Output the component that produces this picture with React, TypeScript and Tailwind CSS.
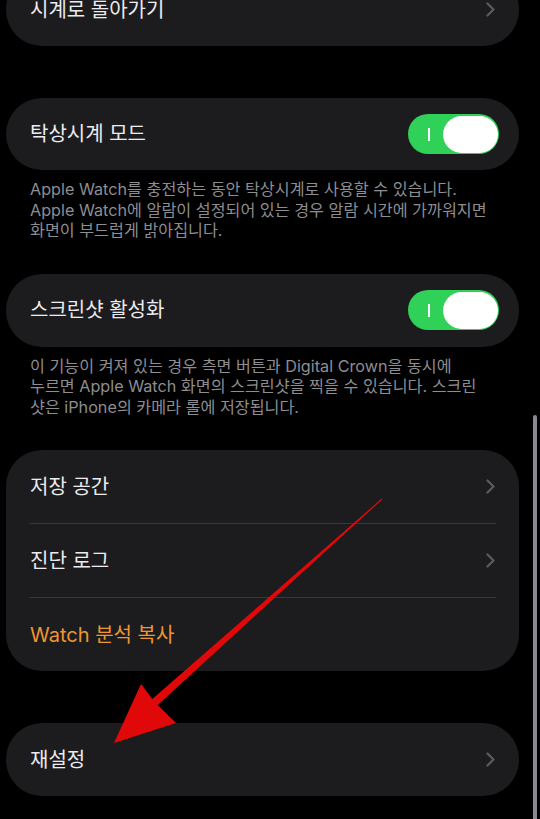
import React from "react";

const font = { fontFamily: 'Inter, "Noto Sans CJK KR", sans-serif' };

const Chevron = () => (
  <svg width="9" height="15" viewBox="0 0 9 15" fill="none">
    <path d="M1.5 1.5 L7.5 7.5 L1.5 13.5" stroke="#5c5c60" strokeWidth="2.2" strokeLinecap="round" strokeLinejoin="round" />
  </svg>
);

const Toggle = () => (
  <div className="relative h-[40px] w-[91px] rounded-full bg-[#30d158]">
    <div className="absolute left-[20px] top-[14px] h-[13px] w-[1.5px] bg-white" />
    <div className="absolute right-[1.5px] top-[1.5px] h-[37px] w-[55px] rounded-full bg-white" />
  </div>
);

const NavRow = ({ label, color = "text-[#ebebf0]", chevron = true }: { label: string; color?: string; chevron?: boolean }) => (
  <div className="flex h-[73px] items-center justify-between pl-[24px] pr-[24px]">
    <span className={`text-[20px] ${color}`}>{label}</span>
    {chevron && <Chevron />}
  </div>
);

const Caption = ({ lines }: { lines: string[] }) => (
  <div className="pl-[24px] pt-[9px] text-[16.2px] leading-[20.5px] text-[#8d8d92]">
    {lines.map((l) => (
      <div key={l} className="whitespace-nowrap">
        {l}
      </div>
    ))}
  </div>
);

export default function App() {
  return (
    <div className="relative h-[819px] w-full overflow-hidden bg-black" style={font}>
      <div className="ml-[6px] mr-[21px] flex flex-col">
        {/* 시계로 돌아가기 */}
        <div className="-mt-[27px] rounded-[36px] bg-[#1c1c1e]">
          <NavRow label="시계로 돌아가기" />
        </div>

        {/* 탁상시계 모드 */}
        <div className="mt-[52px] flex h-[72px] items-center justify-between rounded-[36px] bg-[#1c1c1e] pl-[24px] pr-[20px]">
          <span className="text-[20px] text-[#ebebf0]">탁상시계 모드</span>
          <Toggle />
        </div>
        <Caption
          lines={[
            "Apple Watch를 충전하는 동안 탁상시계로 사용할 수 있습니다.",
            "Apple Watch에 알람이 설정되어 있는 경우 알람 시간에 가까워지면",
            "화면이 부드럽게 밝아집니다.",
          ]}
        />

        {/* 스크린샷 활성화 */}
        <div className="mt-[33px] flex h-[73px] items-center justify-between rounded-[36px] bg-[#1c1c1e] pl-[24px] pr-[20px]">
          <span className="text-[20px] text-[#ebebf0]">스크린샷 활성화</span>
          <Toggle />
        </div>
        <Caption
          lines={[
            "이 기능이 켜져 있는 경우 측면 버튼과 Digital Crown을 동시에",
            "누르면 Apple Watch 화면의 스크린샷을 찍을 수 있습니다. 스크린",
            "샷은 iPhone의 카메라 롤에 저장됩니다.",
          ]}
        />

        {/* 저장 공간 group */}
        <div className="mt-[33px] rounded-[36px] bg-[#1c1c1e]">
          <NavRow label="저장 공간" />
          <div className="mx-[23px] h-px bg-[#38383a]" />
          <NavRow label="진단 로그" />
          <div className="mx-[23px] h-px bg-[#38383a]" />
          <NavRow label="Watch 분석 복사" color="text-[#f0962e]" chevron={false} />
        </div>

        {/* 재설정 */}
        <div className="mt-[52px] rounded-[36px] bg-[#1c1c1e]">
          <NavRow label="재설정" />
        </div>
      </div>

      {/* scroll indicator */}
      <div className="absolute right-[3px] top-[415px] h-[420px] w-[4px] rounded-full bg-[#8a8a8e]" />

      {/* red annotation arrow */}
      <svg className="pointer-events-none absolute left-0 top-0" width="540" height="819" viewBox="0 0 540 819">
        <polygon
          points="381.7,498.6 152.3,699 141,684 114,743 176,723 157.7,705 382.3,499.4"
          fill="#e00808"
        />
      </svg>
    </div>
  );
}
